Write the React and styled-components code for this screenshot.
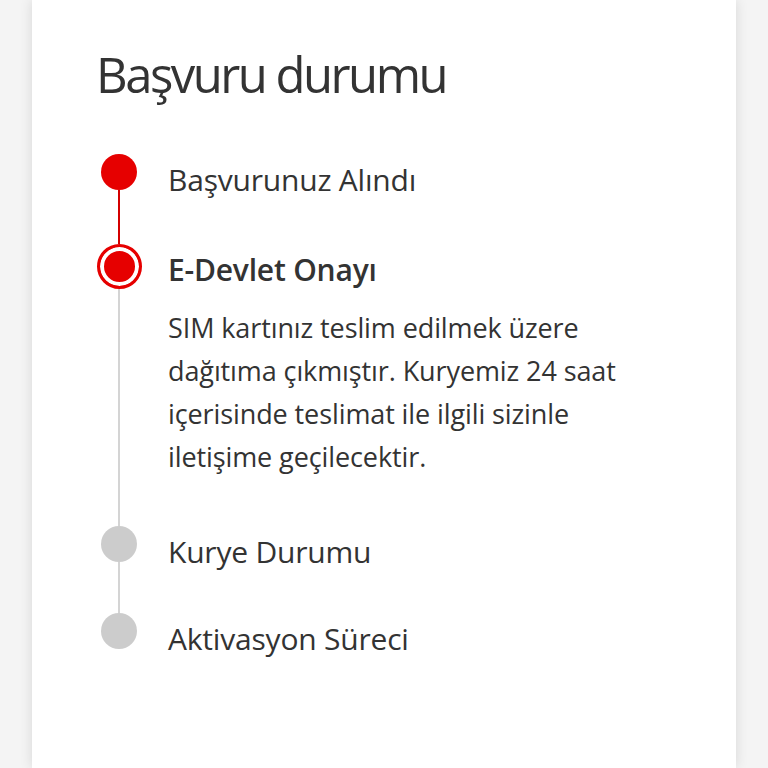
import React from 'react'
import styled, { createGlobalStyle } from 'styled-components'

const GlobalStyle = createGlobalStyle`
  html, body {
    margin: 0;
    padding: 0;
    background: #f4f4f4;
    font-family: "Open Sans", "Liberation Sans", sans-serif;
    color: #333;
  }
`

const Page = styled.div`
  height: 768px;
  overflow: hidden;
  padding: 0 32px;
  box-sizing: border-box;
`

const Card = styled.div`
  background: #fff;
  min-height: 768px;
  box-shadow: 0 0 12px rgba(0, 0, 0, 0.12);
  padding: 44px 64px 0;
  box-sizing: border-box;
`

const Title = styled.h1`
  margin: 0 0 50px;
  font-size: 49px;
  font-weight: 400;
  line-height: 60px;
  letter-spacing: -2.5px;
  color: #333;
`

const Steps = styled.ol`
  list-style: none;
  margin: 0;
  padding: 0;
`

const Step = styled.li`
  display: grid;
  grid-template-columns: 46px 1fr;
  column-gap: 26px;
`

const Rail = styled.div`
  display: flex;
  flex-direction: column;
  align-items: center;
`

const Dot = styled.span`
  box-sizing: border-box;
  flex: none;
  width: ${(p) => (p.current ? '45px' : '36px')};
  height: ${(p) => (p.current ? '45px' : '36px')};
  border-radius: 50%;
  background: ${(p) => (p.done ? '#e60000' : '#cccccc')};
  ${(p) =>
    p.current &&
    `
    border: 3px solid #e60000;
    box-shadow: inset 0 0 0 4px #fff;
  `}
`

const Line = styled.span`
  flex: 1;
  width: 2px;
  background: ${(p) => (p.red ? '#d40000' : '#d4d4d4')};
`

const Body = styled.div`
  padding-bottom: ${(p) => p.gap}px;
`

const Label = styled.div`
  margin-top: 8px;
  font-size: 30px;
  line-height: 36px;
  font-weight: ${(p) => (p.bold ? 600 : 400)};
  letter-spacing: -0.2px;
  color: #333;
`

const Desc = styled.p`
  margin: 18px 0 0;
  font-size: 27px;
  line-height: 43px;
  letter-spacing: -0.1px;
  color: #333;
  max-width: 470px;
`

const steps = [
  { label: 'Başvurunuz Alındı', done: true, gap: 46 },
  {
    label: 'E-Devlet Onayı',
    done: true,
    current: true,
    desc: 'SIM kartınız teslim edilmek üzere dağıtıma çıkmıştır. Kuryemiz 24 saat içerisinde teslimat ile ilgili sizinle iletişime geçilecektir.',
    gap: 48,
  },
  { label: 'Kurye Durumu', gap: 43 },
  { label: 'Aktivasyon Süreci', gap: 0 },
]

export default function App() {
  return (
    <>
      <GlobalStyle />
      <Page>
        <Card>
          <Title>Başvuru durumu</Title>
          <Steps>
            {steps.map((s, i) => {
              const next = steps[i + 1]
              return (
                <Step key={s.label}>
                  <Rail>
                    <Dot done={s.done} current={s.current} />
                    {next && <Line red={next.done} />}
                  </Rail>
                  <Body gap={s.gap}>
                    <Label bold={s.current}>{s.label}</Label>
                    {s.desc && <Desc>{s.desc}</Desc>}
                  </Body>
                </Step>
              )
            })}
          </Steps>
        </Card>
      </Page>
    </>
  )
}
